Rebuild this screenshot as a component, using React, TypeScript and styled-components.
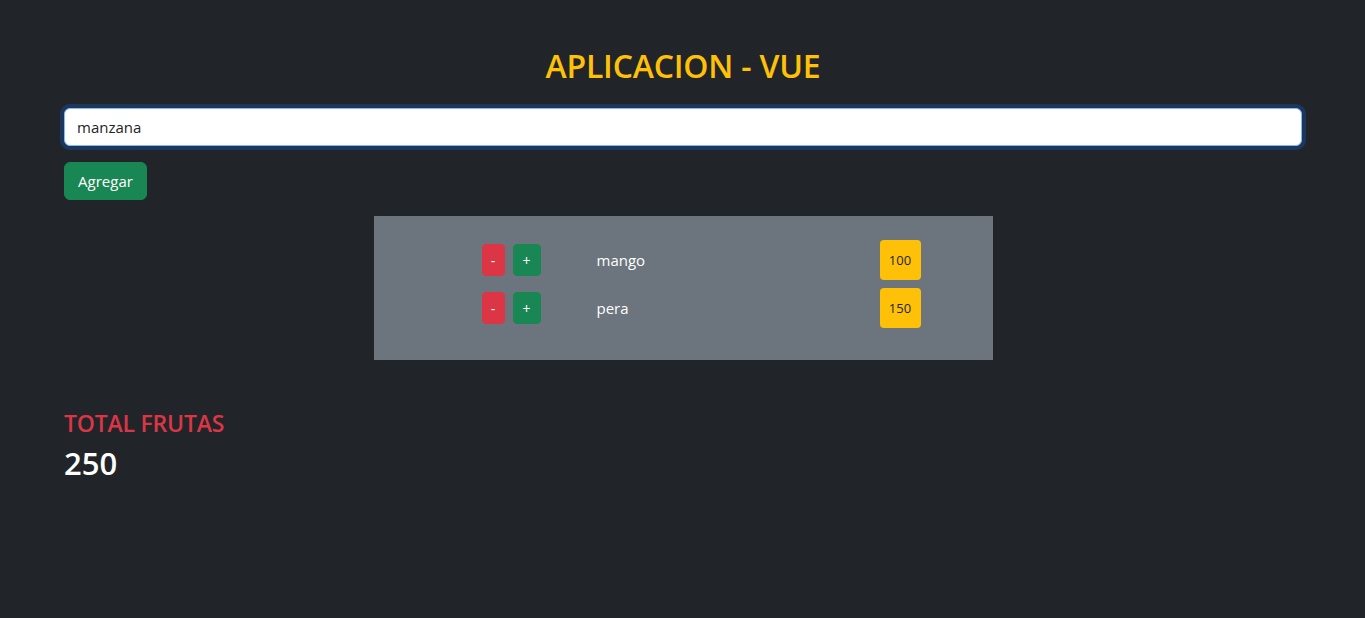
import React, { useState } from "react";
import styled, { createGlobalStyle } from "styled-components";

const Global = createGlobalStyle`
  html, body { margin: 0; padding: 0; background: #212529; }
  body {
    font-family: "Open Sans", "Noto Sans", sans-serif;
    color: #fff;
    min-height: 100vh;
  }
  * { box-sizing: border-box; }
`;

const Page = styled.div`
  padding: 0 63px 0 64px;
  min-height: 618px;
`;

const Title = styled.h2`
  margin: 0;
  padding-top: 46px;
  height: 103px;
  text-align: center;
  color: #ffc107;
  font-size: 32px;
  font-weight: 600;
  line-height: 40px;
  letter-spacing: -0.2px;
`;

const Input = styled.input`
  display: block;
  width: 100%;
  height: 38px;
  margin-top: 5px;
  padding: 6px 12px;
  font-family: inherit;
  font-size: 15px;
  color: #212529;
  caret-color: #212529;
  background: #fff;
  border: 1px solid #86b7fe;
  border-radius: 6px;
  outline: none;
  box-shadow: 0 0 0 4px rgba(13, 110, 253, 0.25);
`;

const AddButton = styled.button`
  display: block;
  margin-top: 16px;
  height: 38px;
  padding: 0 12px;
  width: 83px;
  font-family: inherit;
  font-size: 15px;
  color: #fff;
  background: #198754;
  border: 1px solid #198754;
  border-radius: 6px;
`;

const Panel = styled.div`
  width: 619px;
  margin: 16px auto 0;
  padding: 24px 0 32px 108px;
  background: #6c757d;
  display: flex;
  flex-direction: column;
  gap: 8px;
`;

const Row = styled.div`
  display: grid;
  grid-template-columns: 115px 283px 41px;
  align-items: center;
  height: 40px;
`;

const Controls = styled.div`
  display: flex;
  gap: 8px;
`;

const SmallBtn = styled.button<{ $variant: "danger" | "success" }>`
  height: 32px;
  width: ${(p) => (p.$variant === "danger" ? "23px" : "28px")};
  padding: 0;
  font-family: inherit;
  font-size: 14px;
  color: #fff;
  border-radius: 4px;
  border: 1px solid ${(p) => (p.$variant === "danger" ? "#dc3545" : "#198754")};
  background: ${(p) => (p.$variant === "danger" ? "#dc3545" : "#198754")};
`;

const Name = styled.span`
  font-size: 15px;
  color: #fff;
`;

const Badge = styled.div`
  width: 41px;
  height: 40px;
  display: flex;
  align-items: center;
  justify-content: center;
  background: #ffc107;
  border-radius: 4px;
  color: #212529;
  font-size: 13px;
`;

const TotalLabel = styled.h4`
  margin: 49px 0 0;
  color: #dc3545;
  font-size: 23px;
  font-weight: 600;
  line-height: 29px;
  letter-spacing: -0.2px;
`;

const TotalValue = styled.h2`
  margin: 6px 0 0;
  color: #fff;
  font-size: 31px;
  font-weight: 600;
  line-height: 38px;
`;

const fruits = [
  { name: "mango", qty: 100 },
  { name: "pera", qty: 150 },
];

export default function App() {
  const [value, setValue] = useState("manzana");
  const total = fruits.reduce((s, f) => s + f.qty, 0);
  return (
    <Page>
      <Global />
      <Title>APLICACION - VUE</Title>
      <Input autoFocus value={value} onChange={(e) => setValue(e.target.value)} />
      <AddButton>Agregar</AddButton>
      <Panel>
        {fruits.map((f) => (
          <Row key={f.name}>
            <Controls>
              <SmallBtn $variant="danger">-</SmallBtn>
              <SmallBtn $variant="success">+</SmallBtn>
            </Controls>
            <Name>{f.name}</Name>
            <Badge>{f.qty}</Badge>
          </Row>
        ))}
      </Panel>
      <TotalLabel>TOTAL FRUTAS</TotalLabel>
      <TotalValue>{total}</TotalValue>
    </Page>
  );
}
